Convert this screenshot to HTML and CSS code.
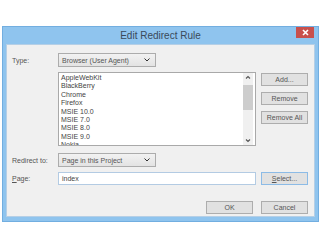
FILE: index.html
```html
<!DOCTYPE html>
<html lang="en">
<head>
    <meta charset="UTF-8">
    <title>Edit Redirect Rule</title>
    <link rel="stylesheet" href="styles.css">
</head>
<body>
    <div class="window">
        <div class="titlebar">
            <span></span>
            <div class="title">Edit Redirect Rule</div>
            <div class="close">
                <svg width="7" height="7" viewBox="0 0 7 7"><path d="M1 1L6 6M6 1L1 6" stroke="#fff" stroke-width="1.6"/></svg>
            </div>
        </div>
        <div class="content">
            <div class="form">
                <label class="label">Type:</label>
                <div class="select">
                    <span>Browser (User Agent)</span>
                    <svg width="6" height="4" viewBox="0 0 6 4"><path d="M0.5 0.5L3 3L5.5 0.5" fill="none" stroke="#333" stroke-width="1"/></svg>
                </div>
                <span></span>

                <span></span>
                <div class="listbox">
                    <div class="items">
                        <div>AppleWebKit</div>
                        <div>BlackBerry</div>
                        <div>Chrome</div>
                        <div>Firefox</div>
                        <div>MSIE 10.0</div>
                        <div>MSIE 7.0</div>
                        <div>MSIE 8.0</div>
                        <div>MSIE 9.0</div>
                        <div>Nokia</div>
                    </div>
                    <div class="scrollbar">
                        <svg width="10" height="9" viewBox="0 0 10 9"><path d="M3 5.5L5 3.5L7 5.5" fill="none" stroke="#555" stroke-width="1.1"/></svg>
                        <div class="track"><div class="thumb"></div></div>
                        <svg width="10" height="9" viewBox="0 0 10 9"><path d="M3 3.5L5 5.5L7 3.5" fill="none" stroke="#555" stroke-width="1.1"/></svg>
                    </div>
                </div>
                <div class="side">
                    <button class="btn">Add...</button>
                    <button class="btn">Remove</button>
                    <button class="btn">Remove All</button>
                </div>

                <label class="label redirect">Redirect to:</label>
                <div class="select redirect">
                    <span>Page in this Project</span>
                    <svg width="6" height="4" viewBox="0 0 6 4"><path d="M0.5 0.5L3 3L5.5 0.5" fill="none" stroke="#333" stroke-width="1"/></svg>
                </div>
                <span></span>

                <label class="label"><u>P</u>age:</label>
                <div class="input">index</div>
                <button class="btn default"><u>S</u>elect...</button>
            </div>
            <div class="footer">
                <button class="btn">OK</button>
                <button class="btn">Cancel</button>
            </div>
        </div>
    </div>
</body>
</html>
```

FILE: styles.css
```css
body {
    margin: 0;
    background: #fff;
    font-family: "Liberation Sans", Arial, sans-serif;
    font-size: 7px;
    color: #444;
}
.window {
    margin: 26px 0 0 2px;
    width: 317px;
    height: 196px;
    box-sizing: border-box;
    background: #8fc4ee;
    border: 1px solid #72aee0;
    padding: 0 3px 4px 3px;
    display: flex;
    flex-direction: column;
}
.titlebar {
    height: 17px;
    display: grid;
    grid-template-columns: 1fr auto 1fr;
    align-items: start;
}
.title {
    font-size: 10px;
    color: #3a4a5a;
    line-height: 17px;
}
.close {
    justify-self: end;
    margin-right: 1px;
    width: 18px;
    height: 11px;
    background: #c9504c;
    display: flex;
    align-items: center;
    justify-content: center;
}
.content {
    flex-grow: 1;
    background: #f0f0f0;
    border: 1px solid #b5cfe6;
    padding: 8px 6px 0 5px;
    display: flex;
    flex-direction: column;
}
.form {
    display: grid;
    grid-template-columns: 46px 198px 52px;
    row-gap: 5px;
}
.label {
    align-self: center;
    color: #555;
}
.label u, .btn u {
    text-decoration: underline;
}
.select {
    width: 98px;
    height: 14px;
    box-sizing: border-box;
    border: 1px solid #acacac;
    background: linear-gradient(#f2f2f2, #e3e3e3);
    display: flex;
    align-items: center;
    justify-content: space-between;
    padding: 0 5px 0 3px;
    color: #555;
}
.redirect {
    margin-top: 2px;
}
.listbox {
    height: 74px;
    box-sizing: border-box;
    border: 1px solid #a9a9a9;
    background: #fff;
    display: flex;
    overflow: hidden;
}
.items {
    flex-grow: 1;
    padding: 1px 0 0 2px;
    line-height: 8.4px;
    color: #444;
    overflow: hidden;
}
.scrollbar {
    width: 10px;
    margin-right: 2px;
    background: #f0f0f0;
    display: flex;
    flex-direction: column;
}
.track {
    flex-grow: 1;
}
.thumb {
    margin-top: 3px;
    height: 25px;
    background: #cdcdcd;
}
.side {
    justify-self: end;
    display: flex;
    flex-direction: column;
    gap: 6px;
    margin-top: 1px;
}
.btn {
    width: 47px;
    height: 13px;
    box-sizing: border-box;
    border: 1px solid #adadad;
    background: #e1e1e1;
    font-family: "Liberation Sans", Arial, sans-serif;
    font-size: 7px;
    color: #555;
    padding: 0;
    margin: 0;
}
.form > .btn {
    justify-self: end;
}
.default {
    border-color: #8cbbe6;
}
.input {
    height: 13px;
    box-sizing: border-box;
    border: 1px solid #b3cbe3;
    background: #fff;
    padding: 0 3px;
    line-height: 11px;
    color: #444;
}
.footer {
    display: flex;
    justify-content: flex-end;
    gap: 8px;
    margin-top: 16px;
}
```
